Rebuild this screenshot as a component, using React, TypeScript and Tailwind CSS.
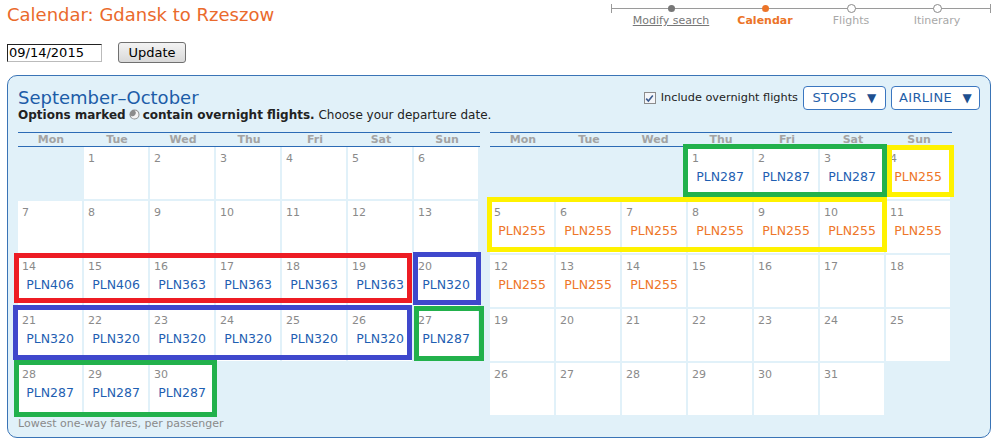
type Day = { d: number; p?: string; orange?: boolean } | null;

const buildMonth = (offset: number, days: number, prices: Record<number, string>, orange: number[] = []) => {
  const cells: Day[] = [];
  for (let i = 0; i < offset; i++) cells.push(null);
  for (let d = 1; d <= days; d++) cells.push({ d, p: prices[d], orange: orange.includes(d) });
  while (cells.length % 7) cells.push(null);
  return cells;
};

const september = buildMonth(1, 30, {
  14: "PLN406", 15: "PLN406", 16: "PLN363", 17: "PLN363", 18: "PLN363", 19: "PLN363", 20: "PLN320",
  21: "PLN320", 22: "PLN320", 23: "PLN320", 24: "PLN320", 25: "PLN320", 26: "PLN320", 27: "PLN287",
  28: "PLN287", 29: "PLN287", 30: "PLN287",
});

const october = buildMonth(
  3,
  31,
  {
    1: "PLN287", 2: "PLN287", 3: "PLN287", 4: "PLN255", 5: "PLN255", 6: "PLN255", 7: "PLN255",
    8: "PLN255", 9: "PLN255", 10: "PLN255", 11: "PLN255", 12: "PLN255", 13: "PLN255", 14: "PLN255",
  },
  [4, 5, 6, 7, 8, 9, 10, 11, 12, 13, 14]
);

const weekdays = ["Mon", "Tue", "Wed", "Thu", "Fri", "Sat", "Sun"];

function Month({ days }: { days: Day[] }) {
  return (
    <div className="w-[462px]">
      <div className="grid grid-cols-7 border-y border-[#2c6bb5] h-[15px]">
        {weekdays.map((w) => (
          <div key={w} className="text-center text-[11px] leading-[13px] font-bold text-[#a3a3a3]">
            {w}
          </div>
        ))}
      </div>
      <div className="grid grid-cols-[repeat(7,64px)] auto-rows-[52px] gap-[2px]">
        {days.map((day, i) =>
          day ? (
            <div key={i} className="bg-white pl-[4px] pt-[5px]">
              <div className="text-[11px] leading-[13px] text-[#8a8a8a]">{day.d}</div>
              {day.p && (
                <div
                  className={`mt-[4px] -ml-[4px] text-center text-[12.5px] leading-[15px] ${
                    day.orange ? "text-[#ee7628]" : "text-[#1f5fb2]"
                  }`}
                >
                  {day.p}
                </div>
              )}
            </div>
          ) : (
            <div key={i} />
          )
        )}
      </div>
    </div>
  );
}

function Progress() {
  return (
    <div className="relative w-[380px] h-[30px] mr-[11px]">
      <div className="absolute left-0 right-0 top-[8px] h-px bg-[#9a9a9a]" />
      <div className="absolute left-0 top-[4px] h-[9px] w-px bg-[#9a9a9a]" />
      <div className="absolute right-0 top-[4px] h-[9px] w-px bg-[#9a9a9a]" />
      <div className="relative flex text-[11px] leading-[13px]">
        <div className="w-[120px] flex flex-col items-center">
          <div className="mt-[5px] w-[7px] h-[7px] rounded-full bg-[#777]" />
          <div className="mt-[2px] text-[#777] underline whitespace-nowrap">Modify search</div>
        </div>
        <div className="w-[68px] flex flex-col items-center">
          <div className="mt-[5px] w-[7px] h-[7px] rounded-full bg-[#ec7428]" />
          <div className="mt-[2px] text-[#ec7428] font-bold whitespace-nowrap">Calendar</div>
        </div>
        <div className="w-[104px] flex flex-col items-center">
          <div className="mt-[4px] w-[9px] h-[9px] rounded-full bg-white border border-[#8a8a8a]" />
          <div className="mt-[1px] text-[#a8a8a8] whitespace-nowrap">Flights</div>
        </div>
        <div className="w-[68px] flex flex-col items-center">
          <div className="mt-[4px] w-[9px] h-[9px] rounded-full bg-white border border-[#8a8a8a]" />
          <div className="mt-[1px] text-[#a8a8a8] whitespace-nowrap">Itinerary</div>
        </div>
      </div>
    </div>
  );
}

function OvernightIcon() {
  return (
    <svg width="11" height="11" viewBox="0 0 11 11" className="inline-block align-[-1px] mx-[3px]">
      <circle cx="5.5" cy="5.5" r="5" fill="#8c8c8c" />
      <path d="M5.5 1.5 A4 4 0 1 1 1.6 6.4 A3 3 0 0 0 5.5 1.5 Z" fill="#f4f4f4" />
    </svg>
  );
}

export default function App() {
  return (
    <div className="relative w-[1002px] h-[446px] bg-white overflow-hidden font-['DejaVu_Sans',sans-serif] text-[#222]">
      {/* header */}
      <div className="flex justify-between items-start">
        <h1 className="pl-[7px] pt-[4px] text-[18px] leading-[22px] text-[#ea6a2c]">Calendar: Gdansk to Rzeszow</h1>
        <Progress />
      </div>

      <div className="flex items-center mt-[12px] pl-[7px]">
        <input
          defaultValue="09/14/2015"
          className="w-[95px] h-[18px] pl-[1px] text-[13px] leading-[16px] text-black bg-white border border-t-[#222] border-l-[#222] border-r-[#bbb] border-b-[#bbb] outline-none font-['DejaVu_Sans',sans-serif]"
        />
        <button className="ml-[16px] w-[68px] h-[21px] rounded-[3px] border border-[#707070] bg-gradient-to-b from-[#f3f3f3] to-[#d9d9d9] text-[13px] leading-[15px] text-black">
          Update
        </button>
      </div>

      {/* calendar panel */}
      <div className="ml-[7px] mt-[12px] w-[984px] h-[363px] rounded-[10px] border border-[#3a74b6] bg-[#e1f1f9] pl-[10px] pt-[12px]">
        <div className="flex justify-between pr-[10px]">
          <div>
            <div className="text-[18px] leading-[20px] text-[#1c5ca8]">September–October</div>
            <div className="text-[12px] leading-[15px] text-[#222]">
              <span className="font-bold">Options marked</span>
              <OvernightIcon />
              <span className="font-bold">contain overnight flights.</span> Choose your departure date.
            </div>
          </div>
          <div className="flex items-center -mt-[2px] h-[24px]">
            <div className="w-[12px] h-[12px] border border-[#8c8c8c] bg-[#f4f6f9] flex items-center justify-center">
              <svg width="9" height="9" viewBox="0 0 9 9">
                <path d="M1.2 4.6 L3.4 7 L7.8 1.6" stroke="#3b5b8f" strokeWidth="1.6" fill="none" />
              </svg>
            </div>
            <span className="ml-[5px] text-[11.3px] text-[#222]">Include overnight flights</span>
            <button className="ml-[5px] w-[83px] h-[24px] rounded-[4px] border border-[#3a76c0] bg-white text-[13px] text-[#1f5ea8] tracking-[0.3px]">
              STOPS <span className="ml-[6px] text-[12px] text-[#1d4f8f]">▼</span>
            </button>
            <button className="ml-[5px] w-[89px] h-[24px] rounded-[4px] border border-[#3a76c0] bg-white text-[13px] text-[#1f5ea8] tracking-[0.3px]">
              AIRLINE <span className="ml-[6px] text-[12px] text-[#1d4f8f]">▼</span>
            </button>
          </div>
        </div>

        <div className="flex gap-[10px] mt-[9px]">
          <Month days={september} />
          <Month days={october} />
        </div>

        <div className="mt-[2px] text-[11px] leading-[13px] text-[#8a8a8a]">Lowest one-way fares, per passenger</div>
      </div>

      {/* highlight annotations */}
      <div className="absolute left-[14px] top-[253px] w-[398px] h-[50px] border-[5px] border-[#ed1c24]" />
      <div className="absolute left-[413px] top-[252px] w-[68px] h-[53px] border-[5px] border-[#3f48cc]" />
      <div className="absolute left-[13px] top-[305px] w-[399px] h-[55px] border-[5px] border-[#3f48cc]" />
      <div className="absolute left-[414px] top-[306px] w-[70px] h-[55px] border-[5px] border-[#22b14c]" />
      <div className="absolute left-[14px] top-[360px] w-[203px] h-[57px] border-[5px] border-[#22b14c]" />
      <div className="absolute left-[683px] top-[144px] w-[204px] h-[53px] border-[5px] border-[#22b14c]" />
      <div className="absolute left-[887px] top-[145px] w-[67px] h-[52px] border-[5px] border-[#fff200]" />
      <div className="absolute left-[487px] top-[197px] w-[400px] h-[55px] border-[5px] border-[#fff200]" />
    </div>
  );
}
